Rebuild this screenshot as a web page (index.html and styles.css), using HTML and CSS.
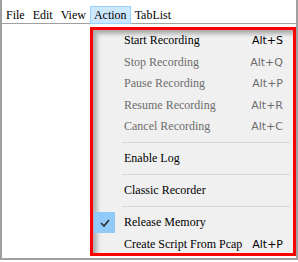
FILE: index.html
```html
<!DOCTYPE html>
<html lang="en">
<head>
  <meta charset="UTF-8">
  <title>Action Menu</title>
  <link rel="stylesheet" href="styles.css">
</head>
<body>
  <div class="window">
    <div class="menubar">
      <span class="menu-title">File</span>
      <span class="menu-title">Edit</span>
      <span class="menu-title">View</span>
      <span class="menu-title active">Action</span>
      <span class="menu-title">TabList</span>
    </div>

    <div class="highlight">
      <div class="dropdown">
        <div class="item"><span class="icon"></span><span class="label">Start Recording</span><span class="key">Alt+S</span></div>
        <div class="item disabled"><span class="icon"></span><span class="label">Stop Recording</span><span class="key">Alt+Q</span></div>
        <div class="item disabled"><span class="icon"></span><span class="label">Pause Recording</span><span class="key">Alt+P</span></div>
        <div class="item disabled"><span class="icon"></span><span class="label">Resume Recording</span><span class="key">Alt+R</span></div>
        <div class="item disabled"><span class="icon"></span><span class="label">Cancel Recording</span><span class="key">Alt+C</span></div>
        <div class="sep"></div>
        <div class="item"><span class="icon"></span><span class="label">Enable Log</span></div>
        <div class="sep"></div>
        <div class="item"><span class="icon"></span><span class="label">Classic Recorder</span></div>
        <div class="sep"></div>
        <div class="item">
          <span class="icon checked">
            <svg width="10" height="8" viewBox="0 0 10 8"><polyline points="1,4 4,7 9,1" fill="none" stroke="#2b2b2b" stroke-width="1.6"/></svg>
          </span>
          <span class="label">Release Memory</span>
        </div>
        <div class="item"><span class="icon"></span><span class="label">Create Script From Pcap</span><span class="key">Alt+P</span></div>
      </div>
    </div>
  </div>
</body>
</html>
```

FILE: styles.css
```css
body {
  margin: 0;
  background: #fff;
  font-family: "Liberation Serif", "Times New Roman", serif;
  font-size: 12px;
  color: #000;
}
.window {
  position: relative;
  width: 298px;
  height: 260px;
  box-sizing: border-box;
  border: 2px solid #a0a0a0;
  border-top: none;
  background: #fff;
}
.menubar {
  display: flex;
  height: 24px;
  box-sizing: border-box;
  border-bottom: 1px solid #a0a0a0;
  padding-top: 6px;
}
.menu-title {
  height: 18px;
  line-height: 16px;
  padding: 0 3px;
  box-sizing: border-box;
  border: 1px solid transparent;
}
.menu-title.active {
  background: #cce8ff;
  border-color: #99d1ff;
}
.highlight {
  position: absolute;
  left: 88px;
  top: 27px;
  width: 206px;
  height: 229px;
  box-sizing: border-box;
  border: 3px solid #ff0000;
  overflow: hidden;
}
.dropdown {
  height: 100%;
  background: #f0f0f0;
  box-shadow: inset 5px 5px 4px -1px rgba(0, 0, 0, 0.28);
}
.item {
  display: flex;
  align-items: center;
  height: 21.5px;
}
.icon {
  width: 21px;
  height: 21px;
  margin-left: 1px;
  margin-right: 9px;
  display: flex;
  align-items: center;
  justify-content: center;
}
.icon.checked {
  background: #91c9f7;
}
.label {
  flex: 1;
}
.key {
  font-family: "DejaVu Sans", Tahoma, sans-serif;
  font-size: 11px;
  margin-right: 10px;
}
.disabled {
  color: #6d6d6d;
}
.sep {
  height: 10.5px;
  margin-left: 29px;
  margin-right: 3px;
  display: flex;
  align-items: center;
}
.sep::after {
  content: "";
  flex: 1;
  border-top: 1px solid #d7d7d7;
}
```
